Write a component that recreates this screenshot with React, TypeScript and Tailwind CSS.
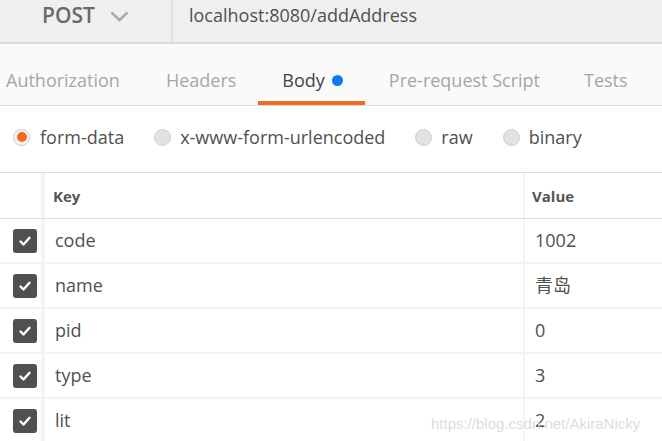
import React from "react";

const font = { fontFamily: '"Open Sans", "Noto Sans CJK SC", sans-serif' };

function Radio({ checked }: { checked?: boolean }) {
  return (
    <span className="relative flex h-[17px] w-[17px] items-center justify-center rounded-full border border-[#cfcfcf] bg-[#e2e2e2]">
      {checked && (
        <span className="absolute inset-[-1px] flex items-center justify-center rounded-full bg-[#f4f4f4] border border-[#d4d4d4]">
          <span className="h-[10px] w-[10px] rounded-full bg-[#f26b21]" />
        </span>
      )}
    </span>
  );
}

function Check() {
  return (
    <span className="flex h-[24px] w-[24px] items-center justify-center rounded-[3px] bg-[#505050]">
      <svg width="14" height="14" viewBox="0 0 14 14">
        <path d="M2.5 7.5 L5.5 10.5 L11.5 3.8" fill="none" stroke="#fff" strokeWidth="2.4" strokeLinecap="round" strokeLinejoin="round" />
      </svg>
    </span>
  );
}

const rows = [
  ["code", "1002"],
  ["name", "青岛"],
  ["pid", "0"],
  ["type", "3"],
  ["lit", "2"],
];

export default function App() {
  return (
    <div className="relative h-[441px] w-[662px] overflow-hidden bg-white" style={font}>
      {/* top bar */}
      <div className="flex h-[44px] border-b-2 border-[#dadada] bg-[#efefef]">
        <div className="flex w-[173px] items-start border-r-2 border-[#e2e2e2] pl-[42px] pt-[1px]">
          <span className="text-[21px] font-semibold leading-[29px] text-[#6a6a6a]">POST</span>
          <svg className="ml-[15px] mt-[10px]" width="19" height="11" viewBox="0 0 19 11">
            <path d="M1.5 1.5 L9.5 9 L17.5 1.5" fill="none" stroke="#a8a8a8" strokeWidth="2.4" />
          </svg>
        </div>
        <div className="pl-[16px] pt-[1px] text-[18px] leading-[28px] text-[#505050]">localhost:8080/addAddress</div>
      </div>
      {/* tabs */}
      <div className="flex h-[62px] items-stretch border-b border-[#dcdcdc] bg-[#fafafa] pl-[6px] text-[18px] text-[#a6a6a6]">
        <div className="flex items-center pr-[23px] pt-[12px]">Authorization</div>
        <div className="flex items-center pl-[23px] pr-[22px] pt-[12px]">Headers</div>
        <div className="flex items-center border-b-4 border-[#f26b21] pl-[24px] pr-[22px] pt-[16px] text-[#444]">
          Body
          <span className="ml-[7px] h-[11px] w-[11px] rounded-full bg-[#0d79f2]" />
        </div>
        <div className="flex items-center pl-[24px] pr-[22px] pt-[12px]">Pre-request Script</div>
        <div className="flex items-center pl-[22px] pt-[12px]">Tests</div>
      </div>
      {/* radios */}
      <div className="flex h-[66px] items-center pb-[4px] text-[18px] text-[#505050]">
        <div className="flex items-center pl-[13px]">
          <Radio checked />
          <span className="ml-[10px]">form-data</span>
        </div>
        <div className="ml-[30px] flex items-center">
          <Radio />
          <span className="ml-[9px]">x-www-form-urlencoded</span>
        </div>
        <div className="ml-[30px] flex items-center">
          <Radio />
          <span className="ml-[9px]">raw</span>
        </div>
        <div className="ml-[30px] flex items-center">
          <Radio />
          <span className="ml-[9px]">binary</span>
        </div>
      </div>
      {/* table */}
      <div className="border-t border-[#dcdcdc]">
        <div className="flex h-[46px] border-b border-[#dcdcdc] text-[15px] font-bold text-[#555]">
          <div className="w-[41px]" />
          <div className="flex w-[482px] items-center border-l-[4px] border-[#f4f4f4] pl-[8px] pt-[1px]">Key</div>
          <div className="flex flex-1 items-center border-l-2 border-[#f4f4f4] pl-[7px] pt-[1px]">Value</div>
        </div>
        {rows.map(([k, v]) => (
          <div key={k} className="flex h-[45px] border-b-2 border-[#f3f3f3] text-[18px] text-[#505050]">
            <div className="flex w-[41px] items-center pl-[13px]">
              <Check />
            </div>
            <div className="flex w-[482px] items-center border-l-[4px] border-[#f4f4f4] pl-[10px]">{k}</div>
            <div className="flex flex-1 items-center border-l-2 border-[#f4f4f4] pl-[10px]">{v}</div>
          </div>
        ))}
      </div>
      <div
        className="absolute left-[431px] top-[413px] text-[15px] text-[#d8d8d8]/90"
        style={{ fontFamily: '"Liberation Sans", sans-serif' }}
      >
        https://blog.csdn.net/AkiraNicky
      </div>
    </div>
  );
}
